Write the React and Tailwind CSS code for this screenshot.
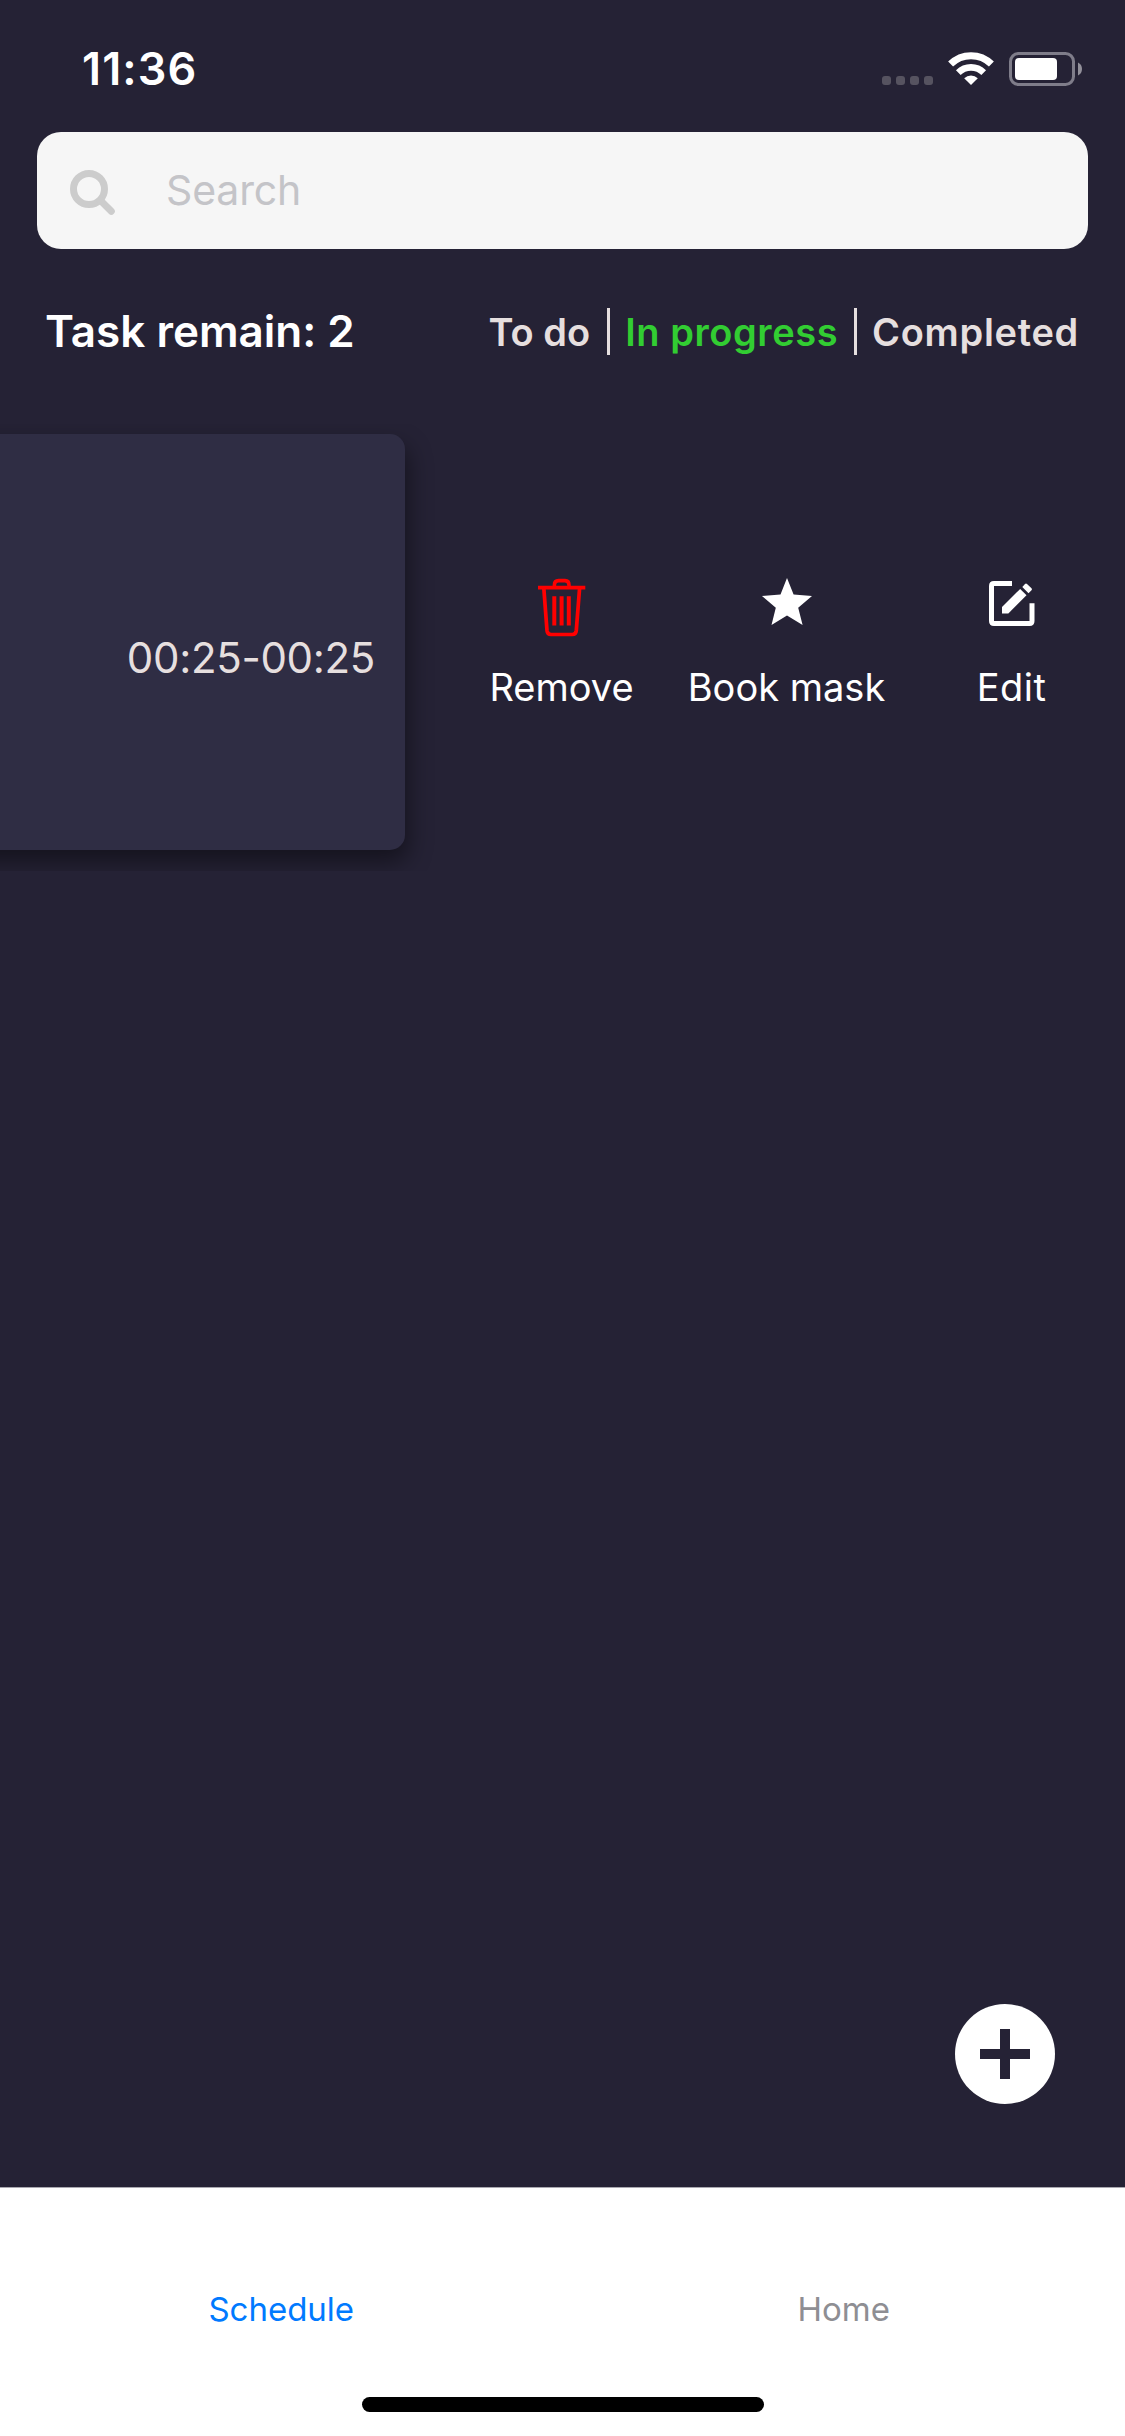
import React from "react";

function WifiIcon() {
  return (
    <svg width="46" height="34" viewBox="0 0 46 34" fill="none" className="block">
      <path d="M2.6 12.1A29 29 0 0 1 43.4 12.1" stroke="#fff" strokeWidth="7" />
      <path d="M10.3 20.6A18 18 0 0 1 35.7 20.6" stroke="#fff" strokeWidth="6.6" />
      <path d="M23 33L16.2 26.2A10 10 0 0 1 29.8 26.2Z" fill="#fff" />
    </svg>
  );
}

function BatteryIcon() {
  return (
    <svg width="74" height="34" viewBox="0 0 74 34" fill="none" className="block">
      <rect x="1.5" y="1.5" width="63" height="31" rx="8" stroke="#7f7d8a" strokeWidth="3" />
      <rect x="6" y="6" width="42" height="22" rx="4" fill="#fff" />
      <path d="M69 10.5C71.6 11.8 73 14 73 17S71.6 22.2 69 23.5Z" fill="#92909a" />
    </svg>
  );
}

function SearchIcon() {
  return (
    <svg width="46" height="46" viewBox="0 0 46 46" fill="none" stroke="#ccc" className="mt-[5px] block">
      <circle cx="19" cy="19" r="15.5" strokeWidth="7" />
      <path d="M30.5 30.5L41.3 41.3" strokeWidth="7" strokeLinecap="round" />
    </svg>
  );
}

function TrashIcon() {
  return (
    <svg width="48" height="60" viewBox="0 0 48 60" fill="none" stroke="#f00" className="block">
      <path d="M0 9.7H47.3" strokeWidth="3.8" />
      <path d="M16.4 8.5V7Q16.4 2.6 20.6 2.6H27Q31 2.6 31 7V8.5" strokeWidth="3.6" />
      <path d="M5.8 10L9 52.5Q9.4 56.5 13 56.5H34.3Q37.9 56.5 38.3 52.5L41.6 10" strokeWidth="3.7" />
      <path d="M16.3 18.3V47.6M23.6 18.3V47.6M30.8 18.3V47.6" strokeWidth="4" />
    </svg>
  );
}

function StarIcon() {
  return (
    <svg width="50" height="47" viewBox="0 0 50 47" className="block">
      <path fill="#fff" d="M25 0L31.6 16.6L50 18L36.2 29.8L40.6 47L25 37.5L9.5 47L13.8 29.8L0 18L18.5 16.6Z" />
    </svg>
  );
}

function EditIcon() {
  return (
    <svg width="46" height="46" viewBox="0 0 46 46" className="mt-[3px] block">
      <path d="M23 2.5H5Q2.5 2.5 2.5 5V40Q2.5 42.5 5 42.5H40.5Q43 42.5 43 40V22.3" fill="none" stroke="#fff" strokeWidth="5" />
      <path fill="#fff" d="M13 32.5V26L31.2 7.9L37.5 14.2L19.3 32.5Z" />
      <path fill="#fff" d="M33.3 5.9L36 3Q37 2 38 3L42.5 7.3Q43.5 8.3 42.5 9.3L39.5 12.2Z" />
    </svg>
  );
}

function Action({ icon, label, tracking }) {
  return (
    <button className="flex w-[225px] flex-col items-center">
      <span className="flex h-[60px] items-start justify-center">{icon}</span>
      <span className={`mt-[27px] whitespace-nowrap text-[38px] leading-[44px] text-white ${tracking}`}>{label}</span>
    </button>
  );
}

export default function App() {
  return (
    <div className="flex h-[2436px] w-[1125px] flex-col overflow-hidden bg-[#252235] font-[Inter,sans-serif]">
      <header className="flex h-[132px] shrink-0 items-start pl-[82px] pr-[42px] pt-[52px]">
        <span className="text-[45px] font-semibold leading-[34px] tracking-[1.1px] text-white">11:36</span>
        <div className="ml-auto flex">
          <div className="mr-[15px] mt-[24px] flex gap-[5px]">
            {[0, 1, 2, 3].map((dot) => (
              <span key={dot} className="size-[9px] rounded-[3px] bg-[#565360]" />
            ))}
          </div>
          <WifiIcon />
          <div className="ml-[15px]">
            <BatteryIcon />
          </div>
        </div>
      </header>

      <label className="mx-[37px] flex h-[117px] shrink-0 items-center rounded-[24px] bg-[#f6f6f6] pl-[33px]">
        <SearchIcon />
        <span className="ml-[50px] pb-[2px] text-[41px] leading-[50px] tracking-[-0.15px] text-[#c4c4c8]">Search</span>
      </label>

      <div className="mt-[57px] flex h-[50px] shrink-0 items-start pl-[45px] pr-[46px]">
        <h1 className="text-[44px] font-semibold leading-[50px] text-white">Task remain: 2</h1>
        <nav className="ml-auto flex items-start pt-[2px] text-[38px] font-semibold leading-[49px] text-[#e6dfdf]">
          <span>To do</span>
          <span className="ml-[17px] h-[47px] w-[3px] bg-[#e6dfdf]" />
          <span className="ml-[15px] tracking-[0.57px] text-[#32cd32]">In progress</span>
          <span className="ml-[16px] h-[47px] w-[3px] bg-[#e6dfdf]" />
          <span className="ml-[15px] tracking-[0.69px]">Completed</span>
        </nav>
      </div>

      <main className="flex grow flex-col">
        <div className="mt-[68px] flex h-[447px] shrink-0 overflow-hidden pt-[10px]">
          <article className="-ml-[100px] flex h-[416px] w-[505px] shrink-0 items-start justify-end rounded-[15px] bg-[#2f2d44] pr-[30px] pt-[200px] shadow-[3px_12px_24px_rgba(0,0,0,0.45)]">
            <time className="text-[42px] leading-[48px] tracking-[-0.33px] text-[#e6dfdf]">00:25-00:25</time>
          </article>
          <div className="ml-[44px] flex items-start pt-[144px]">
            <Action icon={<TrashIcon />} label="Remove" tracking="tracking-normal" />
            <Action icon={<StarIcon />} label="Book mask" tracking="tracking-normal" />
            <Action icon={<EditIcon />} label="Edit" tracking="tracking-[0.5px]" />
          </div>
        </div>
        <button className="mb-[83px] mr-[70px] mt-auto flex size-[100px] items-center justify-center self-end rounded-full bg-white">
          <svg width="50" height="50" viewBox="0 0 50 50" fill="#252235">
            <path d="M20 0H30V20H50V30H30V50H20V30H0V20H20Z" />
          </svg>
        </button>
      </main>

      <footer className="flex h-[249px] shrink-0 flex-col border-t border-[#a9a8b0] bg-white">
        <div className="mt-[101px] flex text-[33px] leading-[40px]">
          <span className="w-1/2 text-center text-[#007aff]">Schedule</span>
          <span className="w-1/2 text-center text-[#8e8e93]">Home</span>
        </div>
        <div className="mx-auto mb-[24px] mt-auto h-[15px] w-[402px] rounded-full bg-black" />
      </footer>
    </div>
  );
}
